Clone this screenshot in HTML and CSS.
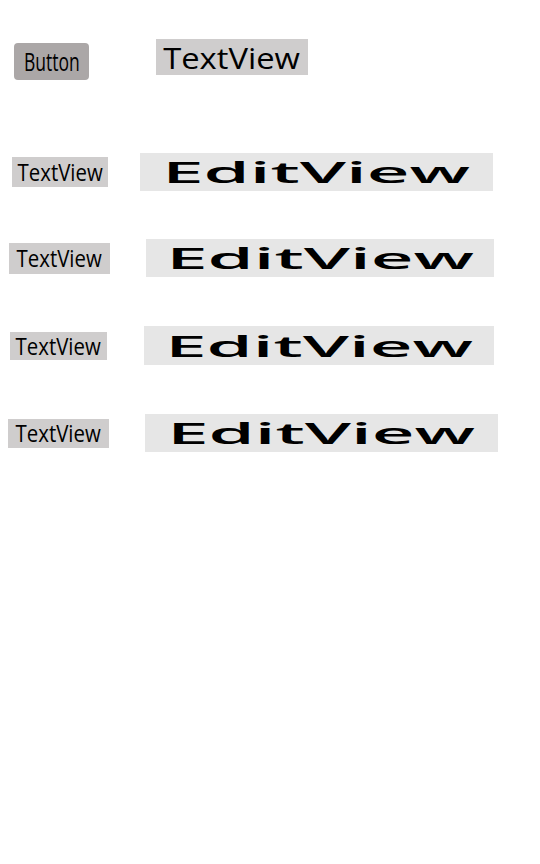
FILE: index.html
```html
<!DOCTYPE html>
<html>
<head>
<meta charset="utf-8">
<link rel="stylesheet" href="styles.css">
</head>
<body>
<div class="page">
  <div class="top">
    <div class="btn"><span class="btn-text">Button</span></div>
    <div class="tv-big"><span class="tv-big-text">TextView</span></div>
  </div>
  <div class="row row1">
    <div class="tv tv1"><span class="tv-text">TextView</span></div>
    <div class="ev ev1"><span class="ev-text">EditView</span></div>
  </div>
  <div class="row row2">
    <div class="tv tv2"><span class="tv-text">TextView</span></div>
    <div class="ev ev2"><span class="ev-text">EditView</span></div>
  </div>
  <div class="row row3">
    <div class="tv tv3"><span class="tv-text">TextView</span></div>
    <div class="ev ev3"><span class="ev-text">EditView</span></div>
  </div>
  <div class="row row4">
    <div class="tv tv4"><span class="tv-text">TextView</span></div>
    <div class="ev ev4"><span class="ev-text">EditView</span></div>
  </div>
</div>
</body>
</html>
```

FILE: styles.css
```css
html, body {
  margin: 0;
  padding: 0;
  background: #ffffff;
}
body {
  font-family: "Open Sans", "Noto Sans", sans-serif;
  color: #000;
}
.page {
  display: flex;
  flex-direction: column;
  width: 540px;
  height: 864px;
}
.top {
  display: flex;
  align-items: flex-start;
  margin-top: 39px;
}
.btn {
  margin-top: 4px;
  margin-left: 14px;
  width: 75px;
  height: 37px;
  background: #aba7a7;
  border-radius: 4px;
  display: flex;
  align-items: center;
  justify-content: center;
}
.btn-text {
  display: inline-block;
  font-size: 25px;
  font-weight: 500;
  line-height: 1;
  transform: scaleX(0.7);
}
.tv-big {
  margin-left: 67px;
  width: 152px;
  height: 36px;
  background: #cfcdcd;
  display: flex;
  align-items: center;
  justify-content: center;
}
.tv-big-text {
  display: inline-block;
  font-size: 29px;
  line-height: 1;
  transform: scaleX(1.13);
}
.row {
  display: flex;
  align-items: center;
}
.row1 { margin-top: 73px; }
.row2 { margin-top: 48px; }
.row3, .row4 { margin-top: 49px; }
.tv {
  background: #cfcdcd;
  display: flex;
  align-items: center;
  justify-content: center;
}
.tv-text {
  display: inline-block;
  font-size: 24px;
  font-weight: 500;
  line-height: 1;
  transform: scaleX(0.85);
}
.ev {
  background: #e6e6e6;
  height: 38px;
  display: flex;
  align-items: center;
  justify-content: center;
}
.ev-text {
  display: inline-block;
  font-size: 28px;
  font-weight: 600;
  line-height: 1;
  transform: scaleX(2.65);
}
.tv1 { margin-left: 12px; width: 96px; height: 30px; }
.ev1 { margin-left: 32px; width: 353px; }
.tv2 { margin-left: 9px; width: 101px; height: 31px; }
.ev2 { margin-left: 36px; width: 348px; }
.tv3 { margin-left: 10px; width: 97px; height: 28px; }
.ev3 { margin-left: 37px; width: 350px; height: 39px; }
.tv4 { margin-left: 8px; width: 101px; height: 29px; }
.ev4 { margin-left: 36px; width: 353px; }
```
